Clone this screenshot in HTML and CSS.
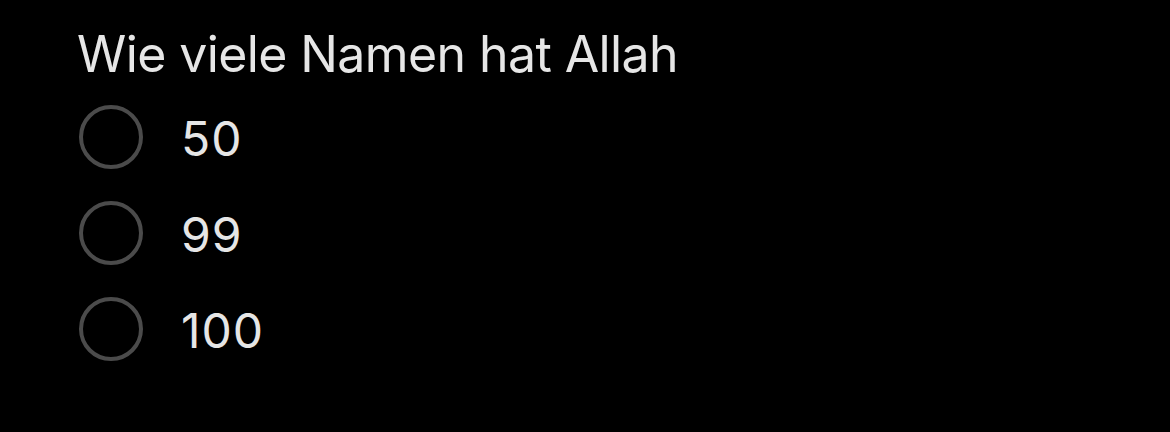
FILE: index.html
```html
<!DOCTYPE html>
<html lang="de">
<head>
    <meta charset="UTF-8">
    <meta name="viewport" content="width=device-width, initial-scale=1.0">
    <title>Quiz</title>
    <link rel="stylesheet" href="styles.css">
</head>
<body>
    <div class="question">
        <h1 class="question-title">Wie viele Namen hat Allah</h1>
        <ul class="choices">
            <li class="choice"><span class="radio"></span><span class="label">50</span></li>
            <li class="choice"><span class="radio"></span><span class="label">99</span></li>
            <li class="choice"><span class="radio"></span><span class="label">100</span></li>
        </ul>
    </div>
</body>
</html>
```

FILE: styles.css
```css
body {
    margin: 0;
    background-color: black;
    color: #e6e6e6;
    font-family: Inter, "Noto Sans", sans-serif;
}
.question {
    padding: 22px 0 0 77px;
}
.question-title {
    margin: 0;
    font-size: 50px;
    font-weight: 400;
    line-height: 64px;
    letter-spacing: -0.6px;
}
.choices {
    list-style: none;
    margin: 3px 0 0;
    padding: 0;
}
.choice {
    display: flex;
    align-items: center;
    height: 96px;
}
.radio {
    box-sizing: border-box;
    width: 64px;
    height: 64px;
    border: 4px solid #4b4b4b;
    border-radius: 50%;
    margin-left: 2px;
}
.label {
    margin-left: 38px;
    font-size: 48px;
    line-height: 1;
    letter-spacing: 1px;
    padding-top: 3px;
}
```
